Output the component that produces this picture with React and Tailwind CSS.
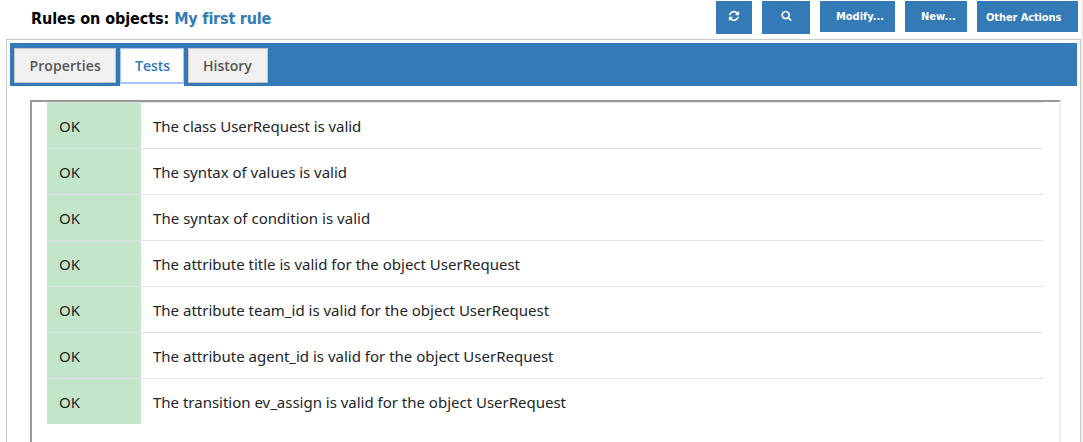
const rows = [
  { text: 'The class UserRequest is valid', tracking: 'tracking-[-0.05px]' },
  { text: 'The syntax of values is valid', tracking: 'tracking-[-0.02px]' },
  { text: 'The syntax of condition is valid', tracking: 'tracking-[0.04px]' },
  { text: 'The attribute title is valid for the object UserRequest', tracking: 'tracking-[0px]' },
  { text: 'The attribute team_id is valid for the object UserRequest', tracking: 'tracking-[0px]' },
  { text: 'The attribute agent_id is valid for the object UserRequest', tracking: 'tracking-[0px]' },
  { text: 'The transition ev_assign is valid for the object UserRequest', tracking: 'tracking-[-0.01px]' },
];

function RefreshIcon() {
  return (
    <svg viewBox="0 0 1792 1792" className="size-3 fill-white" aria-hidden="true">
      <path d="M1639 1056q0 5-1 7-64 268-268 434.5t-478 166.5q-146 0-282.5-55t-243.5-157l-129 129q-19 19-45 19t-45-19-19-45v-448q0-26 19-45t45-19h448q26 0 45 19t19 45-19 45l-137 137q71 66 161 102t187 36q134 0 250-65t186-179q11-17 53-117 8-23 30-23h192q13 0 22.5 9.5t9.5 22.5zm25-800v448q0 26-19 45t-45 19h-448q-26 0-45-19t-19-45 19-45l138-138q-148-137-349-137-134 0-250 65t-186 179q-11 17-53 117-8 23-30 23h-199q-13 0-22.5-9.5t-9.5-22.5v-7q65-268 270-434.5t480-166.5q146 0 284 55.5t245 156.5l130-129q19-19 45-19t45 19 19 45z" />
    </svg>
  );
}

function SearchIcon() {
  return (
    <svg viewBox="0 0 1792 1792" className="size-[11px] fill-white" aria-hidden="true">
      <path d="M1216 832q0-185-131.5-316.5t-316.5-131.5-316.5 131.5-131.5 316.5 131.5 316.5 316.5 131.5 316.5-131.5 131.5-316.5zm512 832q0 52-38 90t-90 38q-54 0-90-38l-343-342q-179 124-399 124-143 0-273.5-55.5t-225-150-150-225-55.5-273.5 55.5-273.5 150-225 225-150 273.5-55.5 273.5 55.5 225 150 150 225 55.5 273.5q0 220-124 399l343 343q37 37 37 90z" />
    </svg>
  );
}

export default function App() {
  return (
    <div className="flex h-[442px] w-[1083px] overflow-hidden bg-white">
      <div className="flex w-[1081px] shrink-0 flex-col">
        <header className="flex h-[39px] shrink-0 items-start justify-between pr-[3px] pl-[31px]">
          <h1 className="flex gap-[5px] pt-[7px] font-['DejaVu_Sans_Condensed','DejaVu_Sans',sans-serif] text-[16px] leading-6 font-bold whitespace-nowrap text-black">
            <span className="tracking-[-0.07px]">Rules on objects:</span>
            <span className="tracking-[-0.2px] text-[#337ab7]">My first rule</span>
          </h1>
          <div className="flex items-start gap-[10px] pt-px font-['DejaVu_Sans_Condensed','DejaVu_Sans',sans-serif] text-[11px] leading-4 font-bold whitespace-nowrap text-white">
            <button className="flex h-[33px] w-9 justify-center bg-[#337ab7] pt-[8.5px]"><RefreshIcon /></button>
            <button className="flex h-[33px] w-12 justify-center bg-[#337ab7] pt-[9px]"><SearchIcon /></button>
            <button className="flex h-[31px] w-[75px] bg-[#337ab7] pt-[8px] pl-4 tracking-[-0.03px]">Modify...</button>
            <button className="flex h-[31px] w-[62px] bg-[#337ab7] pt-[8px] pl-4 tracking-[0.03px]">New...</button>
            <button className="flex h-[31px] w-[101px] bg-[#337ab7] pt-[9px] pl-[9px] tracking-[-0.1px]">Other Actions</button>
          </div>
        </header>
        <main className="ml-[6px] flex flex-1 flex-col border-x border-t border-[#c9c9c9] pt-[3px]">
          <nav className="mr-[3px] ml-[3px] flex h-[43px] shrink-0 items-start gap-1 bg-[#337ab7] pt-[5px] pl-1 font-['Open_Sans','Noto_Sans',sans-serif] text-[14px] leading-5 font-semibold whitespace-nowrap text-[#555555]">
            <a className="h-[35px] w-[102px] border border-[#c5c5c5] bg-[#f0f0f0] pt-[7px] pl-[14.5px] tracking-[0.1px]">Properties</a>
            <div className="h-[38px] w-16 bg-white">
              <a className="block h-[36px] w-16 border border-b-2 border-[#a3c5fd] bg-white pt-[7px] pl-[14px] text-[#337ab7]">Tests</a>
            </div>
            <a className="h-[35px] w-20 border border-[#c5c5c5] bg-[#f0f0f0] pt-[7px] pl-[14px]">History</a>
          </nav>
          <section className="mt-[14px] mr-[19px] ml-[23px] flex-1 border-t-2 border-r-2 border-l-2 border-t-[#999999] border-r-[#eeeeee] border-l-[#999999] pr-4 pl-[15px]">
            {rows.map((row) => (
              <div
                key={row.text}
                className="flex h-[46px] border-t border-[#dee2e6] font-['Noto_Sans',sans-serif] text-[15px] leading-6 font-normal whitespace-nowrap text-[#212529]"
              >
                <div className="w-[94px] bg-[#c3e6cb] pt-[11px] pl-3">OK</div>
                <div className={`pt-[11px] pl-3 ${row.tracking}`}>{row.text}</div>
              </div>
            ))}
          </section>
        </main>
      </div>
      <div className="flex-1 bg-[#f0f0f0]" />
    </div>
  );
}
